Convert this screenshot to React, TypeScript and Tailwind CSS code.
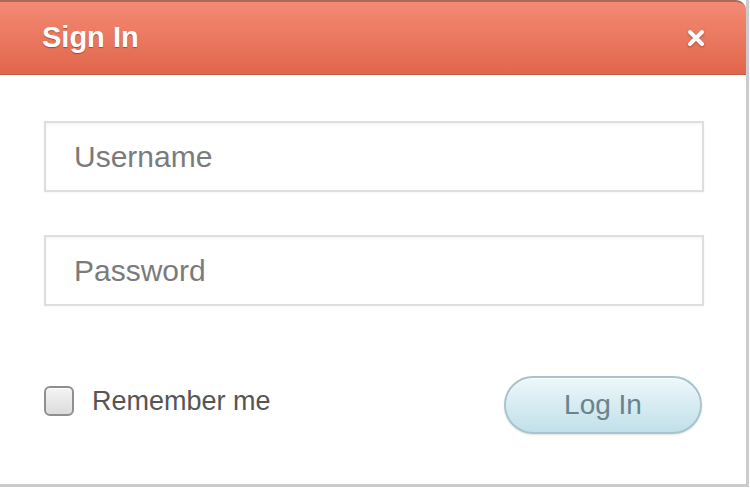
const font = { fontFamily: '"Liberation Sans", Arial, sans-serif' };

function Field({ label }: { label: string }) {
  return (
    <div className="flex h-[71px] w-[660px] items-center border-2 border-[#dedede] bg-white pl-[28px] shadow-[inset_0_2px_3px_rgba(0,0,0,0.04),0_1px_2px_rgba(0,0,0,0.04)]">
      <span className="text-[30px] text-[#7b7b7b]">{label}</span>
    </div>
  );
}

export default function App() {
  return (
    <div style={font} className="flex h-[488px] w-[750px] flex-col bg-white">
      <div className="flex h-[487px] w-[749px] flex-col border-b-[3px] border-r-[3px] border-[#cbcbcb] bg-white">
        <header className="flex h-[74px] shrink-0 items-center justify-between rounded-tr-[10px] border-t-2 border-[#a9695b] bg-gradient-to-b from-[#f48a73] to-[#e0664b] pl-[42px] pr-[40px] shadow-[0_1px_0_#c75a43]">
          <h1 className="text-[29px] font-bold text-white [text-shadow:0_1px_1px_rgba(90,20,10,0.45)]">Sign In</h1>
          <svg width="20" height="20" viewBox="0 0 20 20" className="drop-shadow-[0_1px_1px_rgba(90,20,10,0.4)]">
            <path d="M4 4 L16 16 M16 4 L4 16" stroke="white" strokeWidth="4" strokeLinecap="round" />
          </svg>
        </header>

        <main className="flex flex-col pl-[44px] pt-[47px]">
          <div className="flex flex-col gap-[43px]">
            <Field label="Username" />
            <Field label="Password" />
          </div>

          <div className="mt-[70px] flex w-[658px] items-center justify-between">
            <label className="mb-[8px] flex items-center gap-[18px]">
              <span className="h-[30px] w-[30px] rounded-[6px] border-2 border-[#8f8f8f] bg-gradient-to-b from-[#f4f4f4] to-[#dcdcdc] shadow-[inset_0_1px_1px_rgba(255,255,255,0.9)]" />
              <span className="text-[27px] text-[#555]">Remember me</span>
            </label>
            <button className="flex h-[58px] w-[198px] items-center justify-center rounded-full border-2 border-[#a8c3cb] bg-gradient-to-b from-[#edf7fa] to-[#c1e0ea] text-[28px] text-[#6a828c] shadow-[inset_0_1px_0_rgba(255,255,255,0.9),0_1px_2px_rgba(0,0,0,0.12)]">
              Log In
            </button>
          </div>
        </main>
      </div>
    </div>
  );
}
